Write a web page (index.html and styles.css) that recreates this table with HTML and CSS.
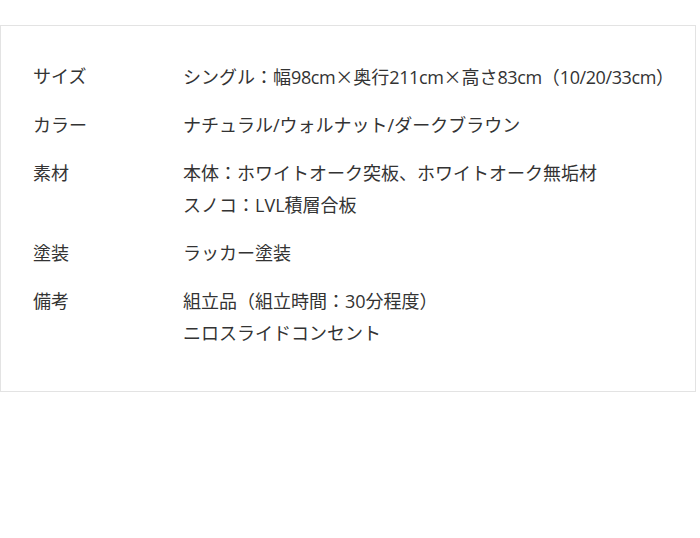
FILE: index.html
```html
<!DOCTYPE html>
<html lang="ja">
<head>
<meta charset="utf-8">
<link rel="stylesheet" href="styles.css">
</head>
<body>
<div class="spec">
  <dl class="spec-list">
    <dt>サイズ</dt>
    <dd>シングル：幅<span class="num">98cm</span><span class="cjk">×</span>奥行<span class="num">211cm</span><span class="cjk">×</span>高さ<span class="num">83cm</span>（<span class="num">10/20/33cm</span>）</dd>
    <dt>カラー</dt>
    <dd>ナチュラル/ウォルナット/ダークブラウン</dd>
    <dt>素材</dt>
    <dd>本体：ホワイトオーク突板、ホワイトオーク無垢材<br>スノコ：LVL積層合板</dd>
    <dt>塗装</dt>
    <dd>ラッカー塗装</dd>
    <dt>備考</dt>
    <dd>組立品（組立時間：30分程度）<br>ニロスライドコンセント</dd>
  </dl>
</div>
</body>
</html>
```
FILE: styles.css
```css
html, body {
  margin: 0;
  padding: 0;
  background: #fff;
}
body {
  font-family: "Open Sans", "Noto Sans CJK JP", sans-serif;
  color: #333;
  font-size: 18px;
}
.spec {
  margin-top: 25px;
  width: 696px;
  box-sizing: border-box;
  border: 1px solid #e3e3e3;
  padding: 34px 32px 42px 32px;
}
.spec-list {
  margin: 0;
  display: grid;
  grid-template-columns: 150px 1fr;
  row-gap: 16px;
  line-height: 32px;
}
.spec-list dt, .spec-list dd {
  margin: 0;
  white-space: nowrap;
}
.cjk {
  font-family: "Noto Sans CJK JP", sans-serif;
}
.num {
  letter-spacing: -0.4px;
}
```
